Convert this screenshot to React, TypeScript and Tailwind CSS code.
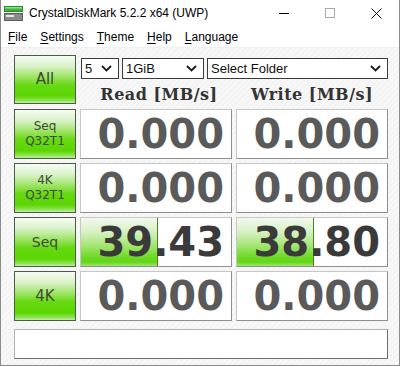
import type { ReactNode } from "react"

const btnGrad =
  "bg-[linear-gradient(180deg,#f7fbf4_0%,#d9f2c8_22%,#9be462_45%,#66d912_62%,#5cd500_85%,#8fe45a_95%,#c2f0a4_100%)]"
const fillGrad =
  "bg-[linear-gradient(180deg,#f3f9ee_0%,#d6f0c2_30%,#9fe46a_60%,#6cd924_82%,#63d615_92%,#9fe677_100%)]"

function Chevron() {
  return (
    <svg width="11" height="7" viewBox="0 0 11 7" className="shrink-0">
      <polyline points="1,1 5.5,5.5 10,1" fill="none" stroke="#1a1a1a" strokeWidth="1.8" />
    </svg>
  )
}

function Combo({ w, label }: { w: string; label: string }) {
  return (
    <div className={`${w} h-[21px] bg-white border border-[#3a3a3a] flex items-center pl-[3px] pr-[6px] justify-between text-[13px] text-[#111]`}>
      <span>{label}</span>
      <Chevron />
    </div>
  )
}

function TestButton({ children, size }: { children: ReactNode; size: string }) {
  return (
    <div
      className={`h-full border border-[#4c5a48] ${btnGrad} flex flex-col items-center justify-center text-[#3d4a35] ${size} leading-[15px] font-['DejaVu_Sans',sans-serif]`}
    >
      {children}
    </div>
  )
}

function Result({ value, pct, active }: { value: string; pct?: number; active?: boolean }) {
  return (
    <div className="relative h-full bg-white border border-[#c6c6c6] border-b-[#8e8e8e] border-r-[#8e8e8e] overflow-hidden">
      {pct !== undefined && (
        <div
          className={`absolute left-0 top-0 bottom-0 ${fillGrad} border-r border-[#3f8a14]`}
          style={{ width: `${pct}%` }}
        />
      )}
      <div
        className={`relative h-full flex items-center justify-end pr-[7px] text-[40px] font-bold font-['DejaVu_Sans',sans-serif] ${
          active ? "text-[#3a3a3a]" : "text-[#5a5a5a]"
        }`}
      >
        {value}
      </div>
    </div>
  )
}

export default function App() {
  const menu = [
    ["F", "ile"],
    ["S", "ettings"],
    ["T", "heme"],
    ["H", "elp"],
    ["L", "anguage"],
  ]

  return (
    <div className="w-[402px] h-[367px] bg-white font-['Liberation_Sans',sans-serif]">
      <div className="w-[400px] h-[366px] border-x border-b border-[#8c8c8c] flex flex-col">
        {/* title bar */}
        <div className="h-[26px] flex items-center bg-white">
          <svg width="20" height="15" viewBox="0 0 20 15" className="ml-[3px] mt-[1px]">
            <rect x="0.5" y="0.5" width="18" height="5" fill="#3cb43c" stroke="#2a8a2a" />
            <rect x="1" y="1" width="17" height="1.5" fill="#8fe08f" />
            <rect x="0.5" y="7.5" width="18" height="7" fill="#8a8a8a" stroke="#5e5e5e" />
            <rect x="2" y="9" width="8" height="2" fill="#e8e8e8" />
          </svg>
          <span className="ml-[5px] text-[12px] text-black">CrystalDiskMark 5.2.2 x64 (UWP)</span>
          <div className="ml-auto flex h-full">
            <div className="w-[46px] flex items-center justify-center">
              <div className="w-[10px] h-px bg-black" />
            </div>
            <div className="w-[46px] flex items-center justify-center">
              <div className="w-[10px] h-[10px] border border-[#a8a8a8]" />
            </div>
            <div className="w-[46px] flex items-center justify-center">
              <svg width="11" height="11" viewBox="0 0 11 11">
                <path d="M0.5 0.5 L10.5 10.5 M10.5 0.5 L0.5 10.5" stroke="#111" strokeWidth="1" />
              </svg>
            </div>
          </div>
        </div>

        {/* menu bar */}
        <div className="h-[21px] flex items-center pl-[7px] gap-[13px] text-[12px] text-black bg-white">
          {menu.map(([k, rest]) => (
            <span key={k + rest}>
              <span className="underline underline-offset-[2px]">{k}</span>
              {rest}
            </span>
          ))}
        </div>

        {/* content */}
        <div className="flex-1 pl-[13px] pt-[7px] bg-[repeating-linear-gradient(135deg,#f3f3f3_0px,#f3f3f3_2px,#f8f8f8_2px,#f8f8f8_4px)] border-t border-[#f0f0f0]">
          <div className="grid grid-cols-[62px_152px_152px] grid-rows-[50px_50px_50px_50px_50px] gap-x-[4px] gap-y-[4px]">
            <div className="h-[49px]">
              <TestButton size="text-[15px]">All</TestButton>
            </div>
            <div className="col-span-2 flex flex-col">
              <div className="flex gap-[3px] pl-[1px] mt-[3px]">
                <Combo w="w-[38px]" label="5" />
                <Combo w="w-[82px]" label="1GiB" />
                <Combo w="w-[181px]" label="Select Folder" />
              </div>
              <div className="grid grid-cols-2 gap-x-[4px] mt-[4px] text-[16px] font-bold text-[#333] font-['DejaVu_Serif',serif] tracking-[0.5px]">
                <div className="text-center pl-[6px]">Read [MB/s]</div>
                <div className="text-center">Write [MB/s]</div>
              </div>
            </div>

            <TestButton size="text-[12px]">
              <span>Seq</span>
              <span>Q32T1</span>
            </TestButton>
            <Result value="0.000" />
            <Result value="0.000" />

            <TestButton size="text-[12px]">
              <span>4K</span>
              <span>Q32T1</span>
            </TestButton>
            <Result value="0.000" />
            <Result value="0.000" />

            <TestButton size="text-[14px]">Seq</TestButton>
            <Result value="39.43" pct={51} active />
            <Result value="38.80" pct={51} active />

            <TestButton size="text-[15px]">4K</TestButton>
            <Result value="0.000" />
            <Result value="0.000" />
          </div>

          <div className="mt-[8px] w-[374px] h-[30px] bg-white border border-[#b4b4b4] border-b-[#6e6e6e] border-r-[#6e6e6e]" />
        </div>
      </div>
    </div>
  )
}
